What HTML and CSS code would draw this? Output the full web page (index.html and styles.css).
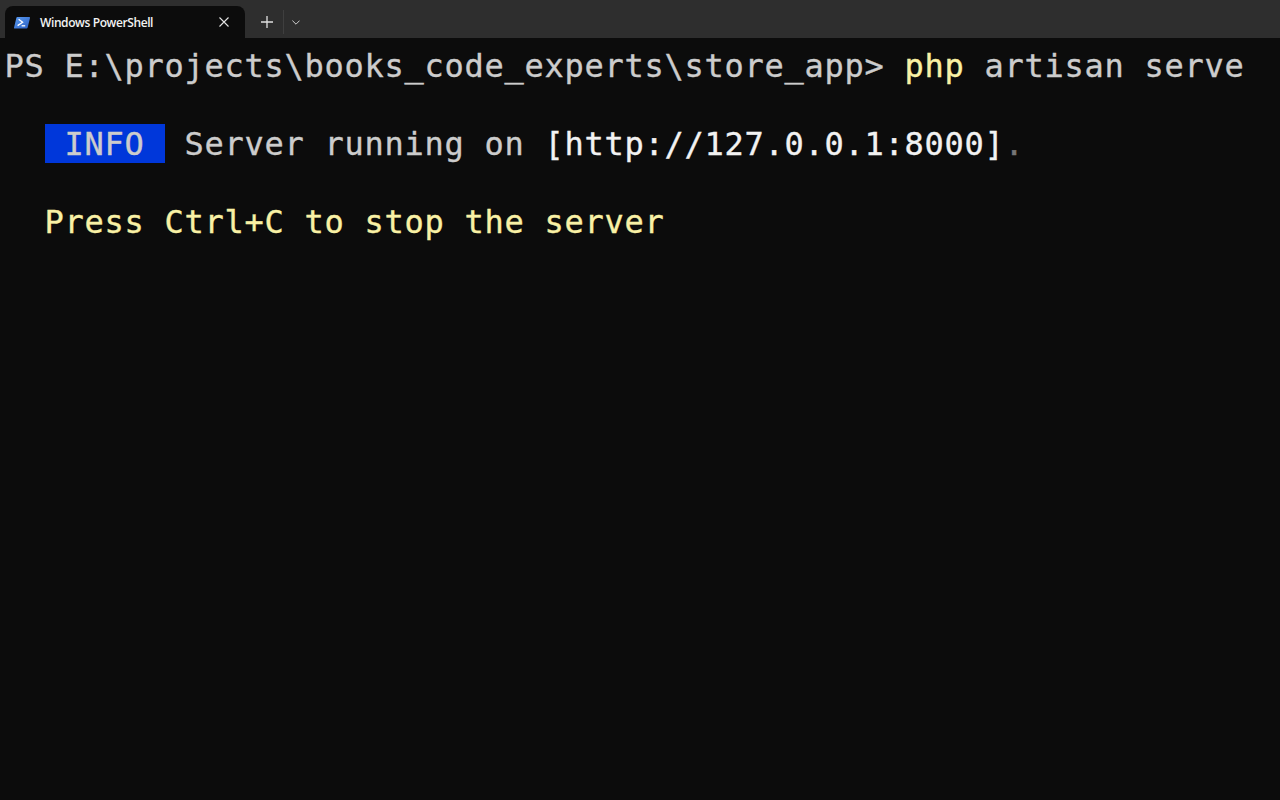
FILE: index.html
```html
<!DOCTYPE html>
<html lang="en">
<head>
<meta charset="utf-8">
<title>Windows PowerShell</title>
<link rel="stylesheet" href="styles.css">
</head>
<body>
<div class="window">
  <header class="titlebar">
    <div class="tab">
      <svg class="tab-icon" width="16" height="16" viewBox="0 0 16 16" aria-hidden="true">
        <defs>
          <linearGradient id="ps" x1="0" y1="0" x2="1" y2="1">
            <stop offset="0" stop-color="#5a9bf0"/>
            <stop offset="1" stop-color="#2a5fc4"/>
          </linearGradient>
        </defs>
        <path d="M3.4 3H15.3c.5 0 .8.4.7.9L13.6 13.8c-.1.5-.5.8-1 .8H.7c-.5 0-.8-.4-.7-.9L2.4 3.8c.1-.5.5-.8 1-.8z" fill="url(#ps)"/>
        <path d="M4.6 5.2 8.6 8.2 3.6 11.6" fill="none" stroke="#fff" stroke-width="1.3"/>
        <path d="M7.6 11.8h3.6" fill="none" stroke="#fff" stroke-width="1.3"/>
      </svg>
      <span class="tab-title">Windows PowerShell</span>
      <svg class="tab-close" width="10" height="10" viewBox="0 0 10 10" aria-hidden="true">
        <path d="M.5.5l9 9M9.5.5l-9 9" stroke="#e4e4e4" stroke-width="1.1" fill="none"/>
      </svg>
    </div>
    <div class="tab-actions">
      <svg class="new-tab" width="12" height="12" viewBox="0 0 12 12" aria-hidden="true">
        <path d="M6 0v12M0 6h12" stroke="#e0e0e0" stroke-width="1.3" fill="none"/>
      </svg>
      <span class="divider"></span>
      <svg class="tab-menu" width="8" height="5" viewBox="0 0 8 5" aria-hidden="true">
        <path d="M.4.6 4 4.2 7.6.6" stroke="#cfcfcf" stroke-width="1" fill="none"/>
      </svg>
    </div>
  </header>
  <main class="terminal">
    <div class="line"><span>PS E:\projects\books_code_experts\store_app&gt; </span><span class="yellow">php</span><span> artisan serve</span></div>
    <div class="line"></div>
    <div class="line"><span>  </span><span class="badge"> INFO </span><span> Server running on </span><span class="bright">[http://127.0.0.1:8000]</span><span class="dim">.</span></div>
    <div class="line"></div>
    <div class="line"><span>  </span><span class="yellow">Press Ctrl+C to stop the server</span></div>
  </main>
</div>
</body>
</html>
```
FILE: styles.css
```css
html, body {
  margin: 0;
  padding: 0;
  height: 100%;
  background: #0c0c0c;
}
.window {
  width: 1280px;
  height: 800px;
  display: flex;
  flex-direction: column;
  overflow: hidden;
}
.titlebar {
  height: 38px;
  flex: none;
  background: #2e2e2e;
  display: flex;
  align-items: flex-end;
  padding-left: 5px;
  box-sizing: border-box;
}
.tab {
  width: 240px;
  height: 32px;
  background: #0c0c0c;
  border-radius: 8px 8px 0 0;
  display: flex;
  align-items: center;
  padding: 0 16px 0 9px;
  box-sizing: border-box;
}
.tab-icon {
  flex: none;
  margin-top: -1px;
}
.tab-title {
  flex: 1;
  margin-left: 10px;
  padding-top: 1px;
  font: 600 12px/16px "Open Sans", "Noto Sans", sans-serif;
  letter-spacing: -0.4px;
  color: #f2f2f2;
}
.tab-close {
  flex: none;
}
.tab-actions {
  height: 32px;
  display: flex;
  align-items: center;
  margin-left: 16px;
}
.new-tab {
  flex: none;
}
.divider {
  width: 1px;
  height: 24px;
  margin: 0 8px 0 10px;
  background: #3f3f3f;
}
.tab-menu {
  flex: none;
}
.terminal {
  flex: 1;
  padding: 8px 4.5px 0;
  font-family: "DejaVu Sans Mono", "Liberation Mono", monospace;
  font-size: 32px;
  letter-spacing: 0.736px;
  color: #cccccc;
  -webkit-text-stroke: 0.35px;
}
.line {
  height: 39px;
  line-height: 41px;
  white-space: pre;
}
.yellow {
  color: #f9f1a5;
}
.badge {
  display: inline-block;
  background: #0037da;
  height: 39px;
  vertical-align: top;
  margin: 0 -0.5px 0 0.5px;
  padding-right: 0.5px;
  text-indent: -0.5px;
}
.bright {
  color: #f2f2f2;
}
.dim {
  color: #767676;
}
```
